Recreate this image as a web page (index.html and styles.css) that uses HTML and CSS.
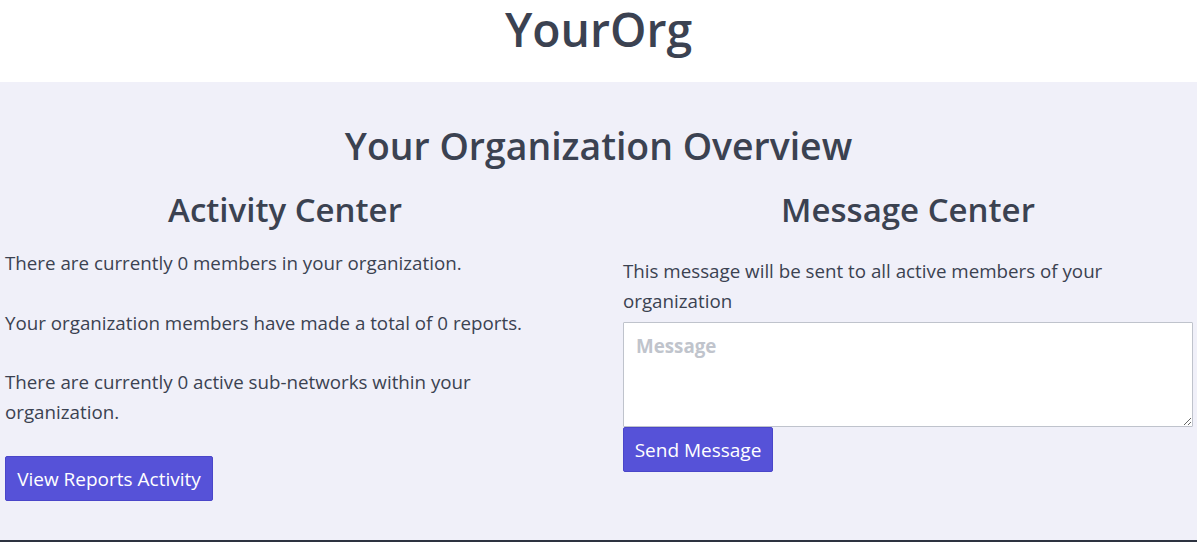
FILE: index.html
```html
<!DOCTYPE html>
<html lang="en">
<head>
<meta charset="utf-8">
<title>YourOrg</title>
<link rel="stylesheet" href="styles.css">
</head>
<body>
<header class="site-header">
  <h1 class="brand">YourOrg</h1>
</header>
<main class="overview">
  <h2 class="overview-title">Your Organization Overview</h2>
  <div class="columns">
    <section class="panel activity">
      <h3 class="panel-title">Activity Center</h3>
      <p class="stat">There are currently 0 members in your organization.</p>
      <p class="stat">Your organization members have made a total of 0 reports.</p>
      <p class="stat">There are currently 0 active sub-networks within your organization.</p>
      <button class="btn btn-activity" type="button">View Reports Activity</button>
    </section>
    <section class="panel messages">
      <h3 class="panel-title">Message Center</h3>
      <p class="note">This message will be sent to all active members of your organization</p>
      <textarea class="message-box" placeholder="Message"></textarea>
      <button class="btn btn-send" type="button">Send Message</button>
    </section>
  </div>
</main>
<footer class="site-footer"></footer>
</body>
</html>
```
FILE: styles.css
```css
* { box-sizing: border-box; }
html, body { margin: 0; padding: 0; }
body {
  font-family: "Open Sans", "Noto Sans", sans-serif;
  color: #3b4251;
  background: #f0f0f9;
  overflow: hidden;
}
.site-header {
  background: #ffffff;
  height: 82px;
  padding-top: 2px;
}
.brand {
  margin: 0;
  text-align: center;
  font-size: 46.3px;
  line-height: 56px;
  font-weight: 600;
}
.overview {
  background: #f0f0f9;
  height: 458px;
  padding-top: 38px;
}
.overview-title {
  margin: 0;
  text-align: center;
  font-size: 37.4px;
  line-height: 52px;
  font-weight: 600;
}
.columns {
  display: grid;
  grid-template-columns: 560px 570px;
  column-gap: 58px;
  padding-left: 5px;
  margin-top: 18px;
}
.panel-title {
  margin: 0;
  text-align: center;
  font-size: 33px;
  line-height: 40px;
  font-weight: 600;
}
.stat {
  margin: 18px 0 30px;
  font-size: 18.75px;
  line-height: 29.5px;
}
.stat + .stat { margin-top: 0; }
.note {
  margin: 26px 0 6px;
  font-size: 18.75px;
  line-height: 30px;
}
.btn {
  display: block;
  border: 1px solid #4a46c9;
  border-radius: 2px;
  background: #5652d8;
  color: #ffffff;
  font-family: inherit;
  font-size: 19px;
  height: 45px;
  padding: 0 10px;
  white-space: nowrap;
  cursor: pointer;
}
.btn-activity { margin-top: 5px; width: 208px; }
.btn-send { width: 150px; }
.message-box {
  display: block;
  width: 100%;
  height: 105px;
  border: 1px solid #bfc3cc;
  border-radius: 1px;
  background: #ffffff;
  padding: 10px 12px;
  font-family: inherit;
  font-size: 18.75px;
  color: #3b4251;
  resize: vertical;
}
.message-box::placeholder {
  color: #c0c4cc;
  font-weight: 700;
}
.site-footer {
  background: #2d3340;
  height: 2px;
}
```
